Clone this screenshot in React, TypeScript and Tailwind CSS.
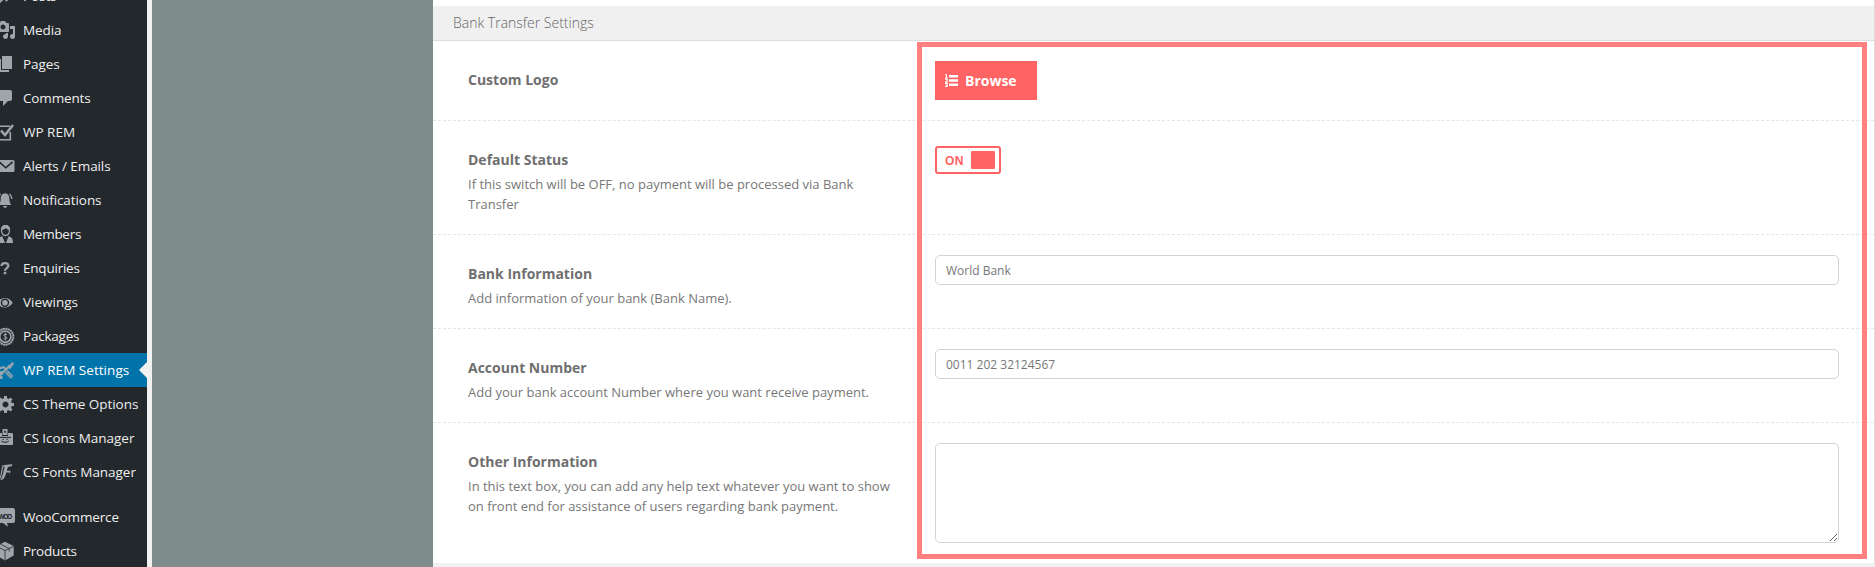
import React from "react";

const S = ({ children }: { children: React.ReactNode }) => (
  <svg viewBox="0 0 20 20" className="h-5 w-5 shrink-0" fill="currentColor">
    {children}
  </svg>
);

const icons: Record<string, React.ReactNode> = {
  posts: (
    <path d="M10.44 3.02l1.82-1.82 6.36 6.35-1.83 1.82c-1.05-.68-2.48-.57-3.41.36l-.75.75c-.92.93-1.04 2.35-.35 3.41l-1.83 1.82-2.41-2.41-2.8 2.79c-.42.42-3.38 2.71-3.8 2.29s1.86-3.39 2.28-3.81l2.79-2.79L4.1 9.36l1.83-1.82c1.05.69 2.48.57 3.4-.36l.75-.75c.93-.92 1.05-2.35.36-3.41z" />
  ),
  media: (
    <path
      fillRule="evenodd"
      d="M13 11V4c0-.55-.45-1-1-1h-1.67L9 1H5L3.67 3H2c-.55 0-1 .45-1 1v7c0 .55.45 1 1 1h10c.55 0 1-.45 1-1zM7 4.5c1.38 0 2.5 1.12 2.5 2.5S8.38 9.5 7 9.5 4.5 8.38 4.5 7 5.62 4.5 7 4.5zM14 6h5v10.5c0 1.38-1.12 2.5-2.5 2.5S14 17.88 14 16.5s1.12-2.5 2.5-2.5c.17 0 .34.02.5.05V9h-3V6zm-4 8.05V13h2v3.5c0 1.38-1.12 2.5-2.5 2.5S7 17.88 7 16.5 8.12 14 9.5 14c.17 0 .34.02.5.05z"
    />
  ),
  pages: <path d="M6 15V2h10v13H6zm-1 1h8v2H3V5h2v11z" />,
  comments: <path d="M5 2h9c1.1 0 2 .9 2 2v7c0 1.1-.9 2-2 2h-2l-5 5v-5H5c-1.1 0-2-.9-2-2V4c0-1.1.9-2 2-2z" />,
  check: (
    <g fill="none" stroke="currentColor">
      <path d="M14.3 10v7.8H2V4.2h12" strokeWidth="1.6" />
      <path d="M5 8.5l4 4.5 8-10" strokeWidth="2.6" />
    </g>
  ),
  mail: (
    <>
      <rect x="1" y="4" width="17.5" height="12" rx="1.5" />
      <path d="M3 5.8l6.8 6 6.8-6" fill="none" stroke="#23282d" strokeWidth="1.6" />
    </>
  ),
  bell: (
    <>
      <path d="M9 3.2c3.2.3 4.4 2.4 4.4 5.3 0 3.2.6 4.7 2 6.5H2.700c1.4-1.800 2-3.300 2-6.500 0-2.900 1.200-5 4.300-5.300zM7 16h4.300c-.3 1.200-1 1.800-2.100 1.800S7.300 17.200 7 16z" />
      <path d="M13.500 4c1.500 1.200 2.200 2.700 2.400 5M4.700 4C3.200 5.200 2.500 6.700 2.300 9" fill="none" stroke="currentColor" strokeWidth="1.300" />
    </>
  ),
  members: (
    <>
      <path d="M5.500 6.500C5.300 3.300 6.900 1.600 9.500 1.600s4.200 1.700 4 4.900c-.2 3-1.700 5-4 5s-3.800-2-4-5z" fill="none" stroke="currentColor" strokeWidth="1.300" />
      <path d="M5.200 6C5 2.800 6.700 1 9.500 1s4.500 1.800 4.300 5c-1.500 0-3-.8-4-2-.9 1.200-2.600 2-4.600 2zM1.500 19c0-4 1.300-6.300 4.800-6.800L9 19zM17 19c0-4-1.300-6.300-4.500-6.800L10 19z" />
    </>
  ),
  question: (
    <>
      <path d="M5.500 8C5.600 5.800 7 5.200 9 5.200c2.200 0 3.300 1 3.300 2.500 0 2.500-3.300 2.300-3.300 5" fill="none" stroke="currentColor" strokeWidth="2.300" />
      <rect x="7.700" y="13.800" width="2.600" height="2.400" />
    </>
  ),
  eye: (
    <>
      <path d="M1 10.800C5 4.300 13 4.300 16.700 10.800 13 17.200 5 17.200 1 10.800z" />
      <circle cx="9" cy="10.800" r="3.500" fill="none" stroke="#23282d" strokeWidth="1.400" />
    </>
  ),
  coin: (
    <>
      <circle cx="9.300" cy="10.700" r="8" fill="none" stroke="currentColor" strokeWidth="2" strokeDasharray="2.100 .4" />
      <circle cx="9.300" cy="10.700" r="5.600" fill="none" stroke="currentColor" strokeWidth="1.700" />
      <path d="M11 8.600C9.800 7.600 7.600 8 7.800 9.400c.2 1.400 3.200 1 3.200 2.600 0 1.400-2.200 1.700-3.500.6M9.300 7v7.500" fill="none" stroke="currentColor" strokeWidth="1" />
    </>
  ),
  tools: (
    <g stroke="currentColor" fill="none">
      <path d="M13.500 6L4 15.500" strokeWidth="2.200" />
      <path d="M17 2l-5.500 4.500 2.500 2.500L17.500 4z" fill="currentColor" strokeWidth=".5" />
      <path d="M2 16.500a3 3 0 0 1 5-3M1 17.500h5.500" strokeWidth="2.800" />
      <path d="M1.500 3a3.200 3.200 0 0 0 5 4M7 6.500L10.500 10" strokeWidth="2.400" />
      <path d="M10.500 11.500l5.500 6" strokeWidth="3.600" />
      <path d="M10.500 11.500l5 5.500" stroke="#0073aa" strokeWidth=".8" />
    </g>
  ),
  gear: (
    <path
      fillRule="evenodd"
      d="M18 12h-2.180c-.17.7-.44 1.350-.81 1.930l1.540 1.540-2.100 2.100-1.540-1.540c-.58.36-1.230.63-1.910.79V19H8v-2.180c-.68-.16-1.330-.43-1.910-.79l-1.540 1.540-2.120-2.120 1.540-1.540c-.36-.58-.63-1.230-.79-1.910H1V9.030h2.170c.16-.7.44-1.350.8-1.940L2.430 5.550l2.100-2.100 1.540 1.540c.58-.37 1.240-.64 1.930-.81V2h3v2.180c.68.16 1.330.43 1.910.79l1.540-1.540 2.120 2.120-1.540 1.540c.36.59.64 1.240.8 1.940H18V12zm-8.500 1.500c1.660 0 3-1.340 3-3s-1.340-3-3-3-3 1.340-3 3 1.340 3 3 3z"
    />
  ),
  badge: (
    <>
      <path d="M1 5h5v3h6V5h4a1 1 0 0 1 1 1v10a1 1 0 0 1-1 1H1z" />
      <path d="M6.500 1h5v6h-5zM8.200 2.800v2h1.600v-2z" fillRule="evenodd" />
      <path d="M3 9.400h12M6.500 11.300h1.400M10.400 11.300h1.400M5.200 13c1.400 1.700 6.200 1.700 7.600 0" fill="none" stroke="#23282d" strokeWidth="1" />
    </>
  ),
  fonts: (
    <>
      <path d="M5.500 4.200C8 2.200 12 3.300 16.300 2l-.6 2.300c-1.500.5-2.600.4-3.700.4l-1.200 4.100h3.400l.5-1.300-.9 4.500-.5-1.500h-3.100C9.200 14.500 8.300 17.800 4 18.300c2.200-1.800 3.200-7.700 4.700-13.500-1.500-.1-2.500 0-3.200-.6z" />
      <path d="M6.800 5C5 9 6 15 3 17.500" fill="none" stroke="currentColor" strokeWidth="1.200" />
    </>
  ),
  woo: (
    <>
      <path d="M0 1h17a2 2 0 0 1 2 2v11a2 2 0 0 1-2 2h-6l1 3.700L7 16H0z" />
      <text x="2.200" y="11.800" fontSize="6.600" fontWeight="700" fill="#23282d" fontFamily="Open Sans, sans-serif" textLength="14">
        WOO
      </text>
    </>
  ),
  box: (
    <>
      <path d="M9 .8l8.700 4.200v9.500L9 19.500.5 14.500V5z" />
      <path d="M.5 5.300L9 9.500l8.700-4.200M9 9.500V19M4.500 3.200l8.700 4.300v3" fill="none" stroke="#23282d" strokeWidth=".8" />
    </>
  ),
};

const menu: { label: string; icon: string; track: string; active?: boolean; gap?: boolean }[] = [
  { label: "Posts", icon: "posts", track: "tracking-[-0.1px]" },
  { label: "Media", icon: "media", track: "tracking-[-0.07px]" },
  { label: "Pages", icon: "pages", track: "tracking-[-0.1px]" },
  { label: "Comments", icon: "comments", track: "tracking-[-0.15px]" },
  { label: "WP REM", icon: "check", track: "tracking-[0px]" },
  { label: "Alerts / Emails", icon: "mail", track: "tracking-[-0.1px]" },
  { label: "Notifications", icon: "bell", track: "tracking-[-0.08px]" },
  { label: "Members", icon: "members", track: "tracking-[-0.28px]" },
  { label: "Enquiries", icon: "question", track: "tracking-[-0.22px]" },
  { label: "Viewings", icon: "eye", track: "tracking-[0px]" },
  { label: "Packages", icon: "coin", track: "tracking-[-0.22px]" },
  { label: "WP REM Settings", icon: "tools", track: "tracking-[0.04px]", active: true },
  { label: "CS Theme Options", icon: "gear", track: "tracking-[-0.05px]" },
  { label: "CS Icons Manager", icon: "badge", track: "tracking-[-0.03px]" },
  { label: "CS Fonts Manager", icon: "fonts", track: "tracking-[-0.03px]" },
  { label: "WooCommerce", icon: "woo", track: "tracking-[-0.15px]", gap: true },
  { label: "Products", icon: "box", track: "tracking-[-0.28px]" },
];

function Sidebar() {
  return (
    <nav className="h-full w-[147px] shrink-0 overflow-hidden bg-[#23282d]">
      <ul className="-mt-[21px] flex flex-col">
        {menu.map((m) => (
          <li
            key={m.label}
            className={`flex h-[34px] items-center ${m.gap ? "mt-[11px]" : ""} ${
              m.active ? "bg-[#0073aa] text-white" : "text-[#eeeeee]"
            }`}
          >
            <span className={`-ml-1 mr-[7px] ${m.active ? "text-[#9aa5ad]" : "text-[#a0a5aa]"}`}>
              <S>{icons[m.icon]}</S>
            </span>
            <span className={`whitespace-nowrap text-[13.5px] leading-5 ${m.track}`}>{m.label}</span>
            {m.active && (
              <svg viewBox="0 0 8 16" className="ml-auto h-4 w-2 shrink-0 text-[#f1f1f1]" fill="currentColor">
                <path d="M8 0v16L0 8z" />
              </svg>
            )}
          </li>
        ))}
      </ul>
    </nav>
  );
}

function Row({
  title,
  desc,
  height,
  last,
  children,
}: {
  title: string;
  desc?: string;
  height: string;
  last?: boolean;
  children: React.ReactNode;
}) {
  return (
    <div className={`flex ${height} ${last ? "" : "border-b border-dashed border-[#e6e6e6]"}`}>
      <div className="w-[502px] shrink-0 pl-[35px] pr-9 pt-[29px] text-[#777777]">
        <h4 className="text-[14px] font-bold leading-5 text-[#6f6f6f]">{title}</h4>
        {desc && <p className="mt-1 text-[13px] leading-5">{desc}</p>}
      </div>
      <div className="flex flex-1 items-start pr-[35px] pt-5">{children}</div>
    </div>
  );
}

const field = "w-full rounded-[5px] border border-[#d2d2d2] bg-white px-2.5 text-[12px] text-[#777777] outline-none";

export default function App() {
  return (
    <div className="flex h-[567px] w-[1875px] overflow-hidden bg-[#f1f1f1] font-['Open_Sans',sans-serif]">
      <Sidebar />
      <div className="ml-[5px] w-[281px] shrink-0 bg-[#7f8c8c]" />
      <main className="relative h-full flex-1">
        <div className="flex h-[563px] flex-col border-r border-[#dddddd] bg-white pt-1.5">
          <div className="h-[35px] shrink-0 border-b border-[#dddddd] bg-[#f0f0f0] pl-5">
            <h3 className="text-[14px] font-light leading-[33px] text-[#666666]">Bank Transfer Settings</h3>
          </div>
          <Row title="Custom Logo" height="h-20">
            <button className="flex h-[39px] w-[102px] items-center bg-[#ff6363] pl-2.5 text-[14px] font-bold text-white">
              <svg viewBox="0 0 13 13" className="mr-[7px] h-[13px] w-[13px]" fill="currentColor">
                <path d="M4 1h9v2.500H4zM4 5.200h9v2.500H4zM4 9.500h9V12H4z" />
                <path d="M0 .8h1.500V4M0 4h3M0 5.300h2.200v1.400L.4 8.200h2.500M0 9.500h2.200v3H0M.5 11h1.700" fill="none" stroke="currentColor" strokeWidth="1.100" />
              </svg>
              Browse
            </button>
          </Row>
          <Row
            title="Default Status"
            desc="If this switch will be OFF, no payment will be processed via Bank Transfer"
            height="h-[114px]"
          >
            <div className="mt-[5px] flex h-7 w-[66px] items-center justify-between rounded-[3px] border-2 border-[#ff6363] pl-2 pr-1">
              <span className="pt-px font-['Liberation_Sans',sans-serif] text-[12px] font-bold leading-none tracking-[0.3px] text-[#ff6363]">
                ON
              </span>
              <span className="h-[18px] w-6 rounded-[1px] bg-[#ff6363]" />
            </div>
          </Row>
          <Row title="Bank Information" desc="Add information of your bank (Bank Name)." height="h-[94px]">
            <input className={`${field} h-[30px]`} defaultValue="World Bank" />
          </Row>
          <Row title="Account Number" desc="Add your bank account Number where you want receive payment." height="h-[94px]">
            <input className={`${field} h-[30px]`} defaultValue="0011 202 32124567" />
          </Row>
          <Row
            title="Other Information"
            desc="In this text box, you can add any help text whatever you want to show on front end for assistance of users regarding bank payment."
            height="h-[140px]"
            last
          >
            <textarea className={`${field} h-[100px] resize`} />
          </Row>
        </div>
        <div className="pointer-events-none absolute bottom-2 left-[484px] right-2 top-[42px] border-[5px] border-[#ff8080]" />
      </main>
    </div>
  );
}
